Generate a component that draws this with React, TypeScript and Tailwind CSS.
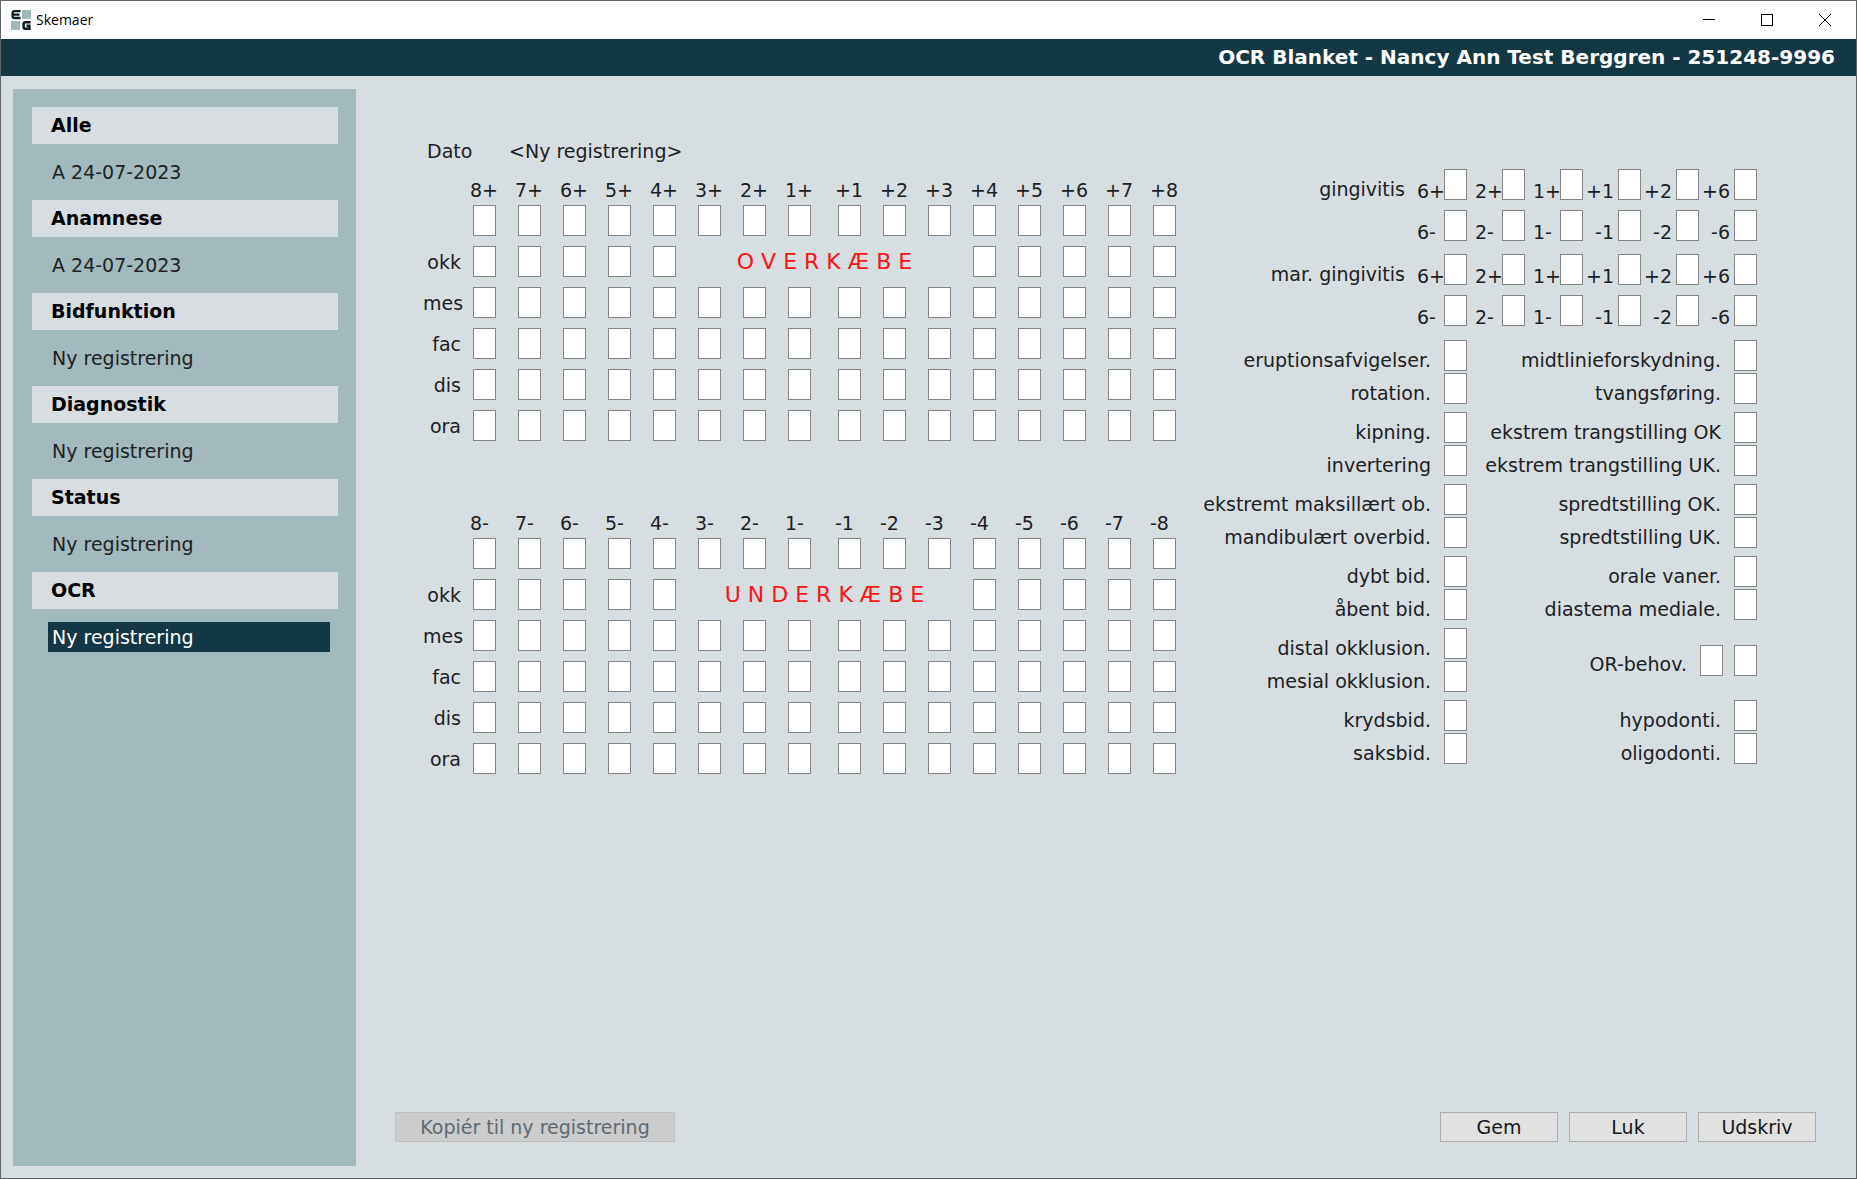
import { useState } from "react";
import type { ReactNode } from "react";

const menu = [
  { title: "Alle", entry: "A 24-07-2023" },
  { title: "Anamnese", entry: "A 24-07-2023" },
  { title: "Bidfunktion", entry: "Ny registrering" },
  { title: "Diagnostik", entry: "Ny registrering" },
  { title: "Status", entry: "Ny registrering" },
  { title: "OCR", entry: "Ny registrering" },
];

const upperTeeth = ["8+", "7+", "6+", "5+", "4+", "3+", "2+", "1+", "+1", "+2", "+3", "+4", "+5", "+6", "+7", "+8"];
const lowerTeeth = ["8-", "7-", "6-", "5-", "4-", "3-", "2-", "1-", "-1", "-2", "-3", "-4", "-5", "-6", "-7", "-8"];
const surfaces = ["", "okk", "mes", "fac", "dis", "ora"];

const gingivitisUpper = ["6+", "2+", "1+", "+1", "+2", "+6"];
const gingivitisLower = ["6-", "2-", "1-", "-1", "-2", "-6"];

const leftFindings = [
  ["eruptionsafvigelser.", "rotation."],
  ["kipning.", "invertering"],
  ["ekstremt maksillært ob.", "mandibulært overbid."],
  ["dybt bid.", "åbent bid."],
  ["distal okklusion.", "mesial okklusion."],
  ["krydsbid.", "saksbid."],
];
const rightFindings = [
  ["midtlinieforskydning.", "tvangsføring."],
  ["ekstrem trangstilling OK", "ekstrem trangstilling UK."],
  ["spredtstilling OK.", "spredtstilling UK."],
  ["orale vaner.", "diastema mediale."],
  ["OR-behov."],
  ["hypodonti.", "oligodonti."],
];

function Box({ id, label }: { id?: string; label?: string }) {
  return <input id={id} aria-label={label} type="text" maxLength={1} className="block h-[31px] w-[23px] shrink-0 border border-[#858585] bg-white text-center outline-none" />;
}

function Logo() {
  return (
    <svg width="20" height="20" viewBox="0 0 20 20" aria-hidden="true">
      <rect x="11" y="0" width="9" height="9" fill="#a1b9bd" />
      <rect x="0" y="11" width="9" height="9" fill="#a1b9bd" />
      <path d="M9.5 1.2H3.5Q1.6 1.2 1.6 3V6.2Q1.6 8 3.5 8H9.5M2 4.6H8.5" fill="none" stroke="#0f1c22" strokeWidth="2.3" />
      <path d="M19.5 12.3H14.5Q12.6 12.3 12.6 14V17Q12.6 18.7 14.5 18.7H18.4V15.7H15.5" fill="none" stroke="#0f1c22" strokeWidth="2.5" />
    </svg>
  );
}

function TitleBar() {
  return (
    <div className="flex h-[38px] items-center bg-white pr-[2px] pl-[10px]">
      <Logo />
      <span className="ml-[5px] flex-1 font-['Open_Sans',sans-serif] text-sm text-black">Skemaer</span>
      <button title="Minimer" className="flex h-full w-[58px] items-center justify-center">
        <svg width="12" height="12" viewBox="0 0 12 12" stroke="#000"><path d="M0 5.5H12" /></svg>
      </button>
      <button title="Maksimer" className="flex h-full w-[58px] items-center justify-center">
        <svg width="12" height="12" viewBox="0 0 12 12" stroke="#000" fill="none"><rect x="0.5" y="0.5" width="11" height="11" /></svg>
      </button>
      <button title="Luk vindue" className="flex h-full w-[58px] items-center justify-center">
        <svg width="12" height="12" viewBox="0 0 12 12" stroke="#000"><path d="M0 0L12 12M12 0L0 12" /></svg>
      </button>
    </div>
  );
}

function Sidebar() {
  const [active, setActive] = useState("OCR");
  return (
    <nav className="w-[343px] shrink-0 bg-[#a2b9bd] pt-[18px] pr-[18px] pl-[19px]">
      {menu.map(item => (
        <section key={item.title} className="mb-[13px]">
          <h2 className="h-[37px] bg-[#d7dde1] pl-[19px] font-bold leading-[37px] text-black">{item.title}</h2>
          <button
            onClick={() => setActive(item.title)}
            className={`mt-[13px] ml-4 block h-[30px] w-[282px] pl-1 text-left leading-[30px] ${active === item.title ? "bg-[#143745] text-white" : "text-[#1d2224]"}`}
          >
            {item.entry}
          </button>
        </section>
      ))}
    </nav>
  );
}

function ToothChart({ teeth, title }: { teeth: string[]; title: string }) {
  const halves = [teeth.slice(0, 8), teeth.slice(8)];
  return (
    <div>
      <div className="flex h-[27px] gap-[5px] pl-[47px]">
        {halves.map(half => (
          <div key={half[0]} className="flex">
            {half.map(tooth => <span key={tooth} className="w-[45px] leading-6">{tooth}</span>)}
          </div>
        ))}
      </div>
      <div className="flex flex-col gap-[10px]">
        {surfaces.map(surface => (
          <div key={surface} className="flex h-[31px] items-center">
            <span className="mr-3 w-[38px] shrink-0 text-right">{surface}</span>
            {surface === "okk" ? (
              <>
                <div className="flex gap-[22px]">
                  {teeth.slice(0, 5).map(tooth => <Box key={tooth} label={`${surface} ${tooth}`} />)}
                </div>
                <span className="w-[297px] text-center text-[22px] text-[#fb1418]">{title}</span>
                <div className="flex gap-[22px]">
                  {teeth.slice(11).map(tooth => <Box key={tooth} label={`${surface} ${tooth}`} />)}
                </div>
              </>
            ) : (
              <div className="flex gap-[27px]">
                {halves.map(half => (
                  <div key={half[0]} className="flex gap-[22px]">
                    {half.map(tooth => <Box key={tooth} label={`${surface} ${tooth}`} />)}
                  </div>
                ))}
              </div>
            )}
          </div>
        ))}
      </div>
    </div>
  );
}

function GingivitisRow({ name, teeth, id }: { name?: string; teeth: string[]; id: string }) {
  return (
    <div className="flex h-[31px] items-center justify-end gap-2">
      {name && <span className="mr-1 pt-2">{name}</span>}
      {teeth.map((tooth, i) => (
        <div key={tooth} className="flex w-[50px] items-center justify-between">
          <label htmlFor={`${id}-${tooth}`} className={`w-[23px] pt-3 whitespace-nowrap ${i > 2 ? "flex justify-end" : ""}`}>{tooth}</label>
          <Box id={`${id}-${tooth}`} />
        </div>
      ))}
    </div>
  );
}

function Findings({ groups }: { groups: string[][] }) {
  return (
    <div className="flex w-[272px] flex-col gap-2">
      {groups.map(group => (
        <div key={group[0]} className="flex h-16 flex-col justify-center gap-[2px]">
          {group.map(name => (
            <div key={name} className="flex h-[31px] items-center justify-end">
              <label htmlFor={name} className="mr-[13px] pt-2 whitespace-nowrap">{name}</label>
              <Box id={name} />
              {name === "OR-behov." && <span className="ml-[11px]"><Box label="OR-behov. 2" /></span>}
            </div>
          ))}
        </div>
      ))}
    </div>
  );
}

function Button({ children, disabled }: { children: ReactNode; disabled?: boolean }) {
  return (
    <button disabled={disabled} className={`h-[30px] border ${disabled ? "w-[280px] border-[#bfbfbf] bg-[#cccccc] text-[#5d6a73]" : "w-[118px] border-[#adadad] bg-[#e1e1e1] text-[#14181a]"}`}>
      {children}
    </button>
  );
}

export default function App() {
  return (
    <div className="flex min-h-screen flex-col border border-[#5f6669] bg-[#d6dee1] font-['DejaVu_Sans',sans-serif] text-[19px] leading-6 text-[#1d2022]">
      <TitleBar />
      <header className="h-[37px] bg-[#133844] pr-[21px] text-right text-xl leading-9 font-bold text-white">
        OCR Blanket - Nancy Ann Test Berggren - 251248-9996
      </header>
      <div className="flex flex-1 px-3 pt-[13px] pb-3">
        <Sidebar />
        <main className="flex flex-1 flex-col pr-7 pl-[39px]">
          <div className="flex justify-between pr-[59px] pl-7">
            <div>
              <div className="mt-[50px] mb-[15px] flex pl-1">
                <span className="w-[82px]">Dato</span>
                <span>&lt;Ny registrering&gt;</span>
              </div>
              <ToothChart teeth={upperTeeth} title="O V E R K Æ B E" />
              <div className="h-[70px]" />
              <ToothChart teeth={lowerTeeth} title="U N D E R K Æ B E" />
            </div>
            <div className="pt-20">
              <div className="flex flex-col gap-[10px]">
                <GingivitisRow name="gingivitis" teeth={gingivitisUpper} id="ging" />
                <GingivitisRow teeth={gingivitisLower} id="ging" />
              </div>
              <div className="mt-[13px] mb-[14px] flex flex-col gap-[10px]">
                <GingivitisRow name="mar. gingivitis" teeth={gingivitisUpper} id="mar" />
                <GingivitisRow teeth={gingivitisLower} id="mar" />
              </div>
              <div className="flex justify-end gap-[18px]">
                <Findings groups={leftFindings} />
                <Findings groups={rightFindings} />
              </div>
            </div>
          </div>
          <div className="mt-auto mb-6 flex justify-between">
            <Button disabled>Kopiér til ny registrering</Button>
            <div className="flex gap-[11px]">
              <Button>Gem</Button>
              <Button>Luk</Button>
              <Button>Udskriv</Button>
            </div>
          </div>
        </main>
      </div>
    </div>
  );
}
